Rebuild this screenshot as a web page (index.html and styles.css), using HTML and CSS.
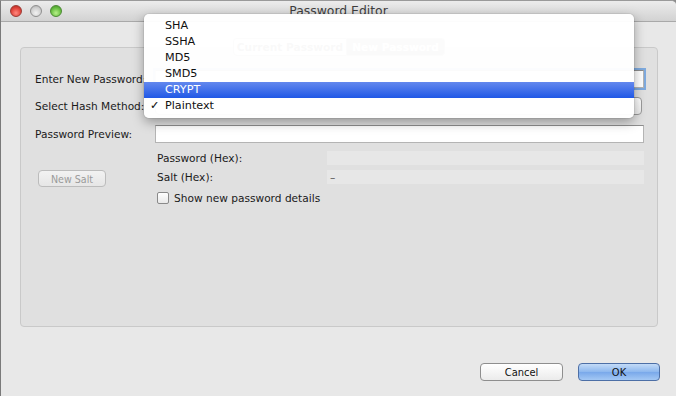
FILE: index.html
```html
<!DOCTYPE html>
<html>
<head>
  <title>Password Editor</title>
  <link rel="stylesheet" href="styles.css">
</head>
<body>
  <div class="window">
    <div class="titlebar">
      <div class="lights">
        <span class="light red"></span>
        <span class="light gray"></span>
        <span class="light green"></span>
      </div>
      <div class="title">Password Editor</div>
    </div>

    <div class="content">
      <div class="tabs">
        <span class="tab">Current Password</span>
        <span class="tab selected">New Password</span>
      </div>

      <div class="group">
        <div class="form-row">
          <label>Enter New Password:</label>
          <div class="input focused"></div>
        </div>
        <div class="form-row row-select">
          <label>Select Hash Method:</label>
          <div class="popup"></div>
        </div>
        <div class="form-row row-preview">
          <label>Password Preview:</label>
          <div class="input"></div>
        </div>

        <div class="hex-row first">
          <div></div>
          <span class="hex-label">Password (Hex):</span>
          <div class="hex-field"></div>
        </div>
        <div class="hex-row">
          <div><button class="btn small" disabled>New Salt</button></div>
          <span class="hex-label">Salt (Hex):</span>
          <div class="hex-field">–</div>
        </div>
        <div class="hex-row check-row">
          <div></div>
          <label class="check"><span class="box"></span>Show new password details</label>
        </div>
      </div>

      <div class="actions">
        <button class="btn">Cancel</button>
        <button class="btn default">OK</button>
      </div>
    </div>

    <!-- open popup menu of the hash method select -->
    <div class="menu">
      <div class="menu-item">SHA</div>
      <div class="menu-item">SSHA</div>
      <div class="menu-item">MD5</div>
      <div class="menu-item">SMD5</div>
      <div class="menu-item active">CRYPT</div>
      <div class="menu-item"><span class="tick">✓</span>Plaintext</div>
    </div>
  </div>
</body>
</html>
```

FILE: styles.css
```css
body {
  margin: 0;
  background: #8c8c8c;
  font-family: "DejaVu Sans", "Liberation Sans", sans-serif;
  font-size: 10.6px;
  color: #1a1a1a;
}
.window {
  position: relative;
  width: 675px;
  height: 395px;
  border-left: 1px solid #7a7a7a;
  border-top: 1px solid #9a9a9a;
  border-top-right-radius: 5px;
  background: #e8e8e8;
  overflow: hidden;
}
.titlebar {
  position: relative;
  height: 20px;
  border-bottom: 1px solid #a9a9a9;
  background: linear-gradient(#ececec, #d2d2d2);
}
.lights {
  position: absolute;
  left: 9px;
  top: 4px;
  display: flex;
  gap: 8px;
}
.light {
  width: 12px;
  height: 12px;
  border-radius: 50%;
  box-sizing: border-box;
}
.light.red {
  background: radial-gradient(circle at 50% 70%, #ff8a80 0%, #e2463d 55%, #a8231c 100%);
  border: 1px solid #9c3a33;
}
.light.gray {
  background: radial-gradient(circle at 50% 70%, #f2f2f2 0%, #cfcfcf 60%, #a8a8a8 100%);
  border: 1px solid #8f8f8f;
}
.light.green {
  background: radial-gradient(circle at 50% 70%, #b8f08a 0%, #6cc145 55%, #3d8a22 100%);
  border: 1px solid #4c8a34;
}
.title {
  text-align: center;
  font-size: 12.4px;
  line-height: 20px;
  color: #3e3e3e;
}
.content {
  padding: 16px 0 0 19px;
}
.tabs {
  position: relative;
  z-index: 1;
  display: flex;
  justify-content: center;
  width: 638px;
  height: 18px;
}
.tab {
  width: 112px;
  line-height: 16px;
  text-align: center;
  font-weight: bold;
  color: #3a3a3a;
  background: linear-gradient(#ffffff, #e6e6e6);
  border: 1px solid #9a9a9a;
  border-radius: 4px 0 0 4px;
}
.tab.selected {
  width: 97px;
  color: #ffffff;
  background: linear-gradient(#8a8a8a, #666666);
  border-left: none;
  border-radius: 0 4px 4px 0;
}
.group {
  box-sizing: border-box;
  width: 638px;
  height: 280px;
  margin-top: -9px;
  padding: 22px 13px 0 14px;
  background: #e0e0e0;
  border: 1px solid #c9c9c9;
  border-radius: 4px;
}
.form-row {
  display: grid;
  grid-template-columns: 120px 1fr;
  align-items: center;
  height: 18px;
}
.row-select {
  margin-top: 9px;
}
.row-preview {
  margin-top: 10px;
}
.input {
  height: 18px;
  box-sizing: border-box;
  background: #ffffff;
  border: 1px solid #b4b4b4;
  border-top-color: #8e8e8e;
}
.input.focused {
  box-shadow: 0 0 0 2px #7eaade;
}
.popup {
  height: 18px;
  margin-right: 2px;
  box-sizing: border-box;
  border: 1px solid #9a9a9a;
  border-radius: 4px;
  background: linear-gradient(#ffffff, #ececec);
}
.hex-row {
  display: grid;
  grid-template-columns: 120px 172px 1fr;
  align-items: start;
  margin-top: 5px;
}
.hex-row.first {
  margin-top: 8px;
}
.hex-label {
  padding-left: 2px;
  line-height: 14px;
}
.hex-field {
  height: 14px;
  line-height: 14px;
  padding-left: 3px;
  background: #e7e7e7;
  color: #555;
}
.check-row {
  margin-top: 4px;
  grid-template-columns: 120px 1fr;
}
.check {
  display: flex;
  align-items: center;
  gap: 5px;
  padding-left: 2px;
  line-height: 14px;
}
.check .box {
  width: 12px;
  height: 12px;
  box-sizing: border-box;
  border: 1px solid #8a8a8a;
  border-radius: 2px;
  background: linear-gradient(#ffffff, #e9e9e9);
}
.btn {
  height: 18px;
  padding: 0;
  box-sizing: border-box;
  font-family: "DejaVu Sans Condensed", "DejaVu Sans", sans-serif;
  font-stretch: condensed;
  font-size: 11px;
  color: #111;
  border: 1px solid #8e8e8e;
  border-radius: 4px;
  background: linear-gradient(#ffffff, #ebebeb);
}
.btn.small {
  width: 68px;
  height: 17px;
  margin-left: 3px;
  font-size: 10.6px;
  color: #9a9a9a;
  border-color: #bcbcbc;
  background: linear-gradient(#f2f2f2, #e6e6e6);
}
.actions {
  display: flex;
  gap: 15px;
  margin: 36px 0 0 460px;
}
.actions .btn {
  width: 83px;
}
.btn.default {
  width: 82px;
  border-color: #4d6fa6;
  background: linear-gradient(#c3dbf7, #8cb7ee 50%, #79a8ea 51%, #a4c8f4);
}
.menu {
  position: absolute;
  left: 143px;
  top: 13px;
  z-index: 2;
  width: 490px;
  padding: 4px 0;
  font-size: 11.2px;
  background: rgba(255, 255, 255, 0.97);
  border-radius: 5px;
  box-shadow: 0 4px 12px rgba(0, 0, 0, 0.35), 0 0 0 1px rgba(0, 0, 0, 0.06);
}
.menu-item {
  position: relative;
  height: 16px;
  line-height: 16px;
  padding-left: 21px;
  color: #111;
}
.menu-item.active {
  color: #ffffff;
  background: linear-gradient(#6388ee, #2058e6);
}
.tick {
  position: absolute;
  left: 6px;
  font-weight: bold;
}
```
